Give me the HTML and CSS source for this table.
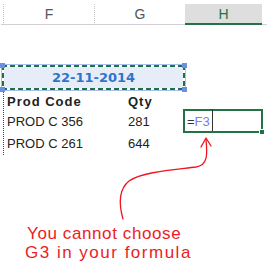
FILE: index.html
```html
<!DOCTYPE html>
<html>
<head>
<meta charset="utf-8">
<link rel="stylesheet" href="styles.css">
</head>
<body>
<div class="sheet">
  <div class="colhead">
    <div class="ch-lead"></div>
    <div class="ch ch-f">F</div>
    <div class="ch ch-g">G</div>
    <div class="ch ch-h">H</div>
    <div class="ch-tail"></div>
  </div>
  <div class="date-cell">
    22-11-2014
    <span class="handle tl"></span><span class="handle tr"></span>
    <span class="handle bl"></span><span class="handle br"></span>
  </div>
  <div class="grid">
    <div class="row r1"><div class="c name b">Prod Code</div><div class="c qty b">Qty</div></div>
    <div class="row r2">
      <div class="c name">PROD C 356</div><div class="c qty">281</div>
      <div class="active"><span class="eq">=</span><span class="ref">F3</span><span class="caret"></span><span class="fill"></span></div>
    </div>
    <div class="row r3"><div class="c name">PROD C 261</div><div class="c qty">644</div></div>
  </div>
  <div class="note">
    <div class="l1">You cannot choose</div>
    <div class="l2">G3 in your formula</div>
  </div>
  <svg class="arrow" width="267" height="267" viewBox="0 0 267 267">
    <path d="M206,139 C207,152 209,165 196,167 C172,170 142,172 129,181 C118,190 119,205 123,219" fill="none" stroke="#f0141e" stroke-width="1.3" stroke-linecap="round"/>
    <path d="M201,147 L206,138 L211,146" fill="none" stroke="#f0141e" stroke-width="1.3" stroke-linecap="round" stroke-linejoin="round"/>
  </svg>
</div>
</body>
</html>
```
FILE: styles.css
```css
body {
  margin: 0;
  background: #fff;
  font-family: "Liberation Sans", Arial, sans-serif;
}
.sheet {
  position: relative;
  width: 267px;
  height: 267px;
  overflow: hidden;
}
.colhead {
  display: flex;
  padding-top: 4px;
}
.ch-lead {
  width: 2px;
  margin-left: 1px;
  height: 21px;
  box-sizing: border-box;
  border-bottom: 1px solid #d3cfd6;
}
.ch {
  box-sizing: border-box;
  height: 21px;
  line-height: 20px;
  text-align: center;
  font-size: 14px;
  color: #555;
  border-bottom: 1px solid #d3cfd6;
}
.ch-f, .ch-g {
  width: 91px;
  border-left: 1px dotted #c4c4c4;
}
.ch-h {
  width: 77px;
  background: #dedede;
  border-bottom: 2px solid #217346;
  color: #217346;
}
.ch-tail {
  flex: 1;
  height: 21px;
  box-sizing: border-box;
  border-bottom: 1px solid #d3cfd6;
}
.date-cell {
  position: relative;
  margin: 40px 0 0 2px;
  width: 183px;
  height: 25px;
  box-sizing: border-box;
  padding-top: 2px;
  text-align: center;
  font-family: "DejaVu Sans", sans-serif;
  font-weight: bold;
  font-size: 13px;
  line-height: 21px;
  color: #2e74c9;
  box-shadow: 0 0 0 1px #a9c0ee;
  background:
    repeating-linear-gradient(90deg, #1e7145 0 5px, #fff 5px 8px) left top / 100% 2px no-repeat,
    repeating-linear-gradient(90deg, #1e7145 0 5px, #fff 5px 8px) left bottom / 100% 2px no-repeat,
    repeating-linear-gradient(180deg, #1e7145 0 5px, #fff 5px 8px) left top / 2px 100% no-repeat,
    repeating-linear-gradient(180deg, #1e7145 0 5px, #fff 5px 8px) right top / 2px 100% no-repeat,
    #e6ecf8;
}
.handle {
  position: absolute;
  width: 5px;
  height: 5px;
  background: #6a90e2;
}
.handle.tl { left: -2px; top: -2px; }
.handle.tr { right: -2px; top: -2px; }
.handle.bl { left: -2px; bottom: -2px; }
.handle.br { right: -2px; bottom: -2px; }
.grid {
  margin-left: 3px;
  border-left: 1px dotted #444;
}
.row {
  display: flex;
  align-items: flex-end;
  font-size: 13px;
  line-height: 15px;
  color: #222;
}
.r1 { height: 19px; }
.r2 { height: 24px; }
.r3 { height: 22px; }
.r2 .c, .r3 .c { margin-bottom: 4px; }
.c.b { font-weight: bold; letter-spacing: 1px; }
.name {
  width: 124px;
  box-sizing: border-box;
  padding-left: 3px;
}
.qty { width: 55px; }
.active {
  position: relative;
  align-self: stretch;
  width: 80px;
  box-sizing: border-box;
  border: 2px solid #217346;
  display: flex;
  align-items: flex-end;
  padding: 0 0 2px 2px;
}
.eq { color: #333; }
.ref { color: #7a7cf0; }
.caret {
  align-self: stretch;
  width: 1px;
  margin: -2px 0 -2px 2px;
  background: #333;
}
.fill {
  position: absolute;
  right: -4px;
  bottom: -4px;
  width: 4px;
  height: 4px;
  background: #217346;
  border: 1px solid #fff;
}
.note {
  margin-top: 69px;
  color: #ec1c24;
  font-size: 17px;
  line-height: 19px;
}
.l1 { padding-left: 27px; letter-spacing: 0.6px; }
.l2 { padding-left: 25px; letter-spacing: 1.5px; }
.arrow {
  position: absolute;
  left: 0;
  top: 0;
  pointer-events: none;
}
```
